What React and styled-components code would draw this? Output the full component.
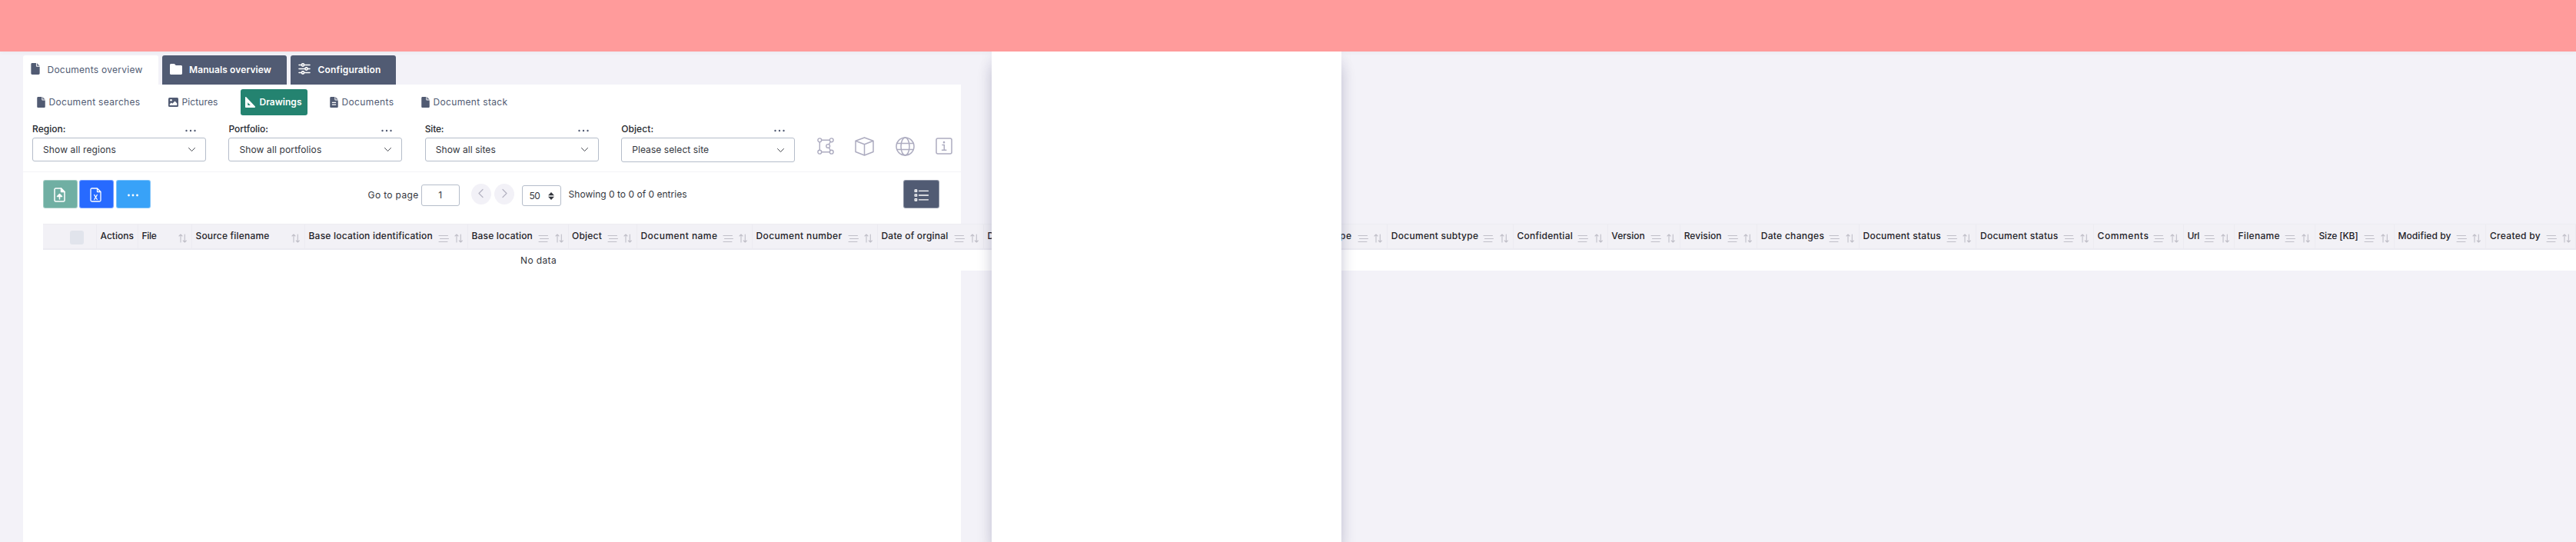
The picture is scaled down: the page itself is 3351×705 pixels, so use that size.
import React, { useLayoutEffect, useRef, useState } from "react";
import styled, { createGlobalStyle } from "styled-components";

const slate = "#515b73";

const GlobalStyle = createGlobalStyle`
  * { box-sizing: border-box; }
  body { margin: 0; font-family: Inter, "Open Sans", "Liberation Sans", sans-serif; font-size: 12px; color: #33363d; }
`;

const Page = styled.div`
  position: relative;
  height: 705px;
  overflow: hidden;
  background: #f3f2f8;
`;
const Banner = styled.header`
  height: 67px;
  background: #ff9b9b;
  box-shadow: 0 1px 5px rgba(60, 60, 90, 0.06);
`;
const Tabs = styled.nav`
  display: flex;
  gap: 5px;
  padding: 5px 0 0 30px;
`;
const Tab = styled.div`
  width: ${(p) => p.$width}px;
  height: 38px;
  padding-left: ${(p) => p.$pad}px;
  display: flex;
  align-items: center;
  gap: ${(p) => p.$gap}px;
  border-radius: 3px 3px 0 0;
  background: ${(p) => (p.$active ? "#fff" : slate)};
  color: ${(p) => (p.$active ? slate : "#fff")};
  font-weight: ${(p) => (p.$active ? 400 : 600)};

  svg { margin-bottom: 3px; }
`;
const Panel = styled.main`
  width: 1220px;
  height: 595px;
  margin-left: 30px;
  background: #fff;
`;
const SubTabs = styled.nav`
  display: flex;
  padding: 6px 0 0 12px;
`;
const SubTab = styled.div`
  height: 34px;
  width: ${(p) => p.$width}px;
  margin-right: ${(p) => p.$after}px;
  padding-left: ${(p) => p.$pad || 5.5}px;
  display: flex;
  align-items: center;
  gap: ${(p) => p.$gap || 5}px;
  border-radius: 3px;
  color: ${(p) => (p.$active ? "#fff" : slate)};
  background: ${(p) => (p.$active ? "#248370" : "transparent")};
  font-weight: ${(p) => (p.$active ? 600 : 400)};
`;
const Filters = styled.section`
  display: flex;
  height: 74px;
  padding: 9px 0 0 12px;
  border-bottom: 1px solid #f4f4f7;
`;
const Field = styled.div`
  width: 226px;
  margin-right: 29.4px;
`;
const FieldHead = styled.div`
  height: 20px;
  padding: 0 13px 2px 0;
  display: flex;
  justify-content: space-between;
  align-items: center;
  color: #25282e;
  font-weight: 500;
`;
const SelectBox = styled.div`
  height: ${(p) => (p.$tall ? 32 : 31)}px;
  padding: 0 12px 0 13px;
  display: flex;
  justify-content: space-between;
  align-items: center;
  border: 1px solid #b5bdca;
  border-radius: 3px;
`;
const FilterIcons = styled.div`
  display: flex;
  align-items: center;
  gap: 27.5px;
  height: 26px;
  margin: 18px 0 0 -1px;
  color: #adacc0;
`;
const Toolbar = styled.section`
  display: flex;
  align-items: flex-start;
  height: 67px;
  padding: 10px 28px 0 26px;
`;
const ActionButton = styled.div`
  width: ${(p) => p.$width || 45}px;
  height: 37px;
  margin-right: ${(p) => (p.$last ? 0 : 2.3)}px;
  display: flex;
  align-items: center;
  justify-content: center;
  padding: ${(p) => p.$nudge || "0"};
  border-radius: 3px;
  border: 1px solid rgba(255, 255, 255, 0.35);
  color: #fff;
  background: ${(p) => p.$color};
`;
const Pager = styled.div`
  flex: 1;
  display: flex;
  padding: 6px 0 0 283px;
`;
const PagerText = styled.div`
  height: 28px;
  display: flex;
  align-items: center;
  margin-top: ${(p) => p.$drop || 0}px;
  margin-left: ${(p) => p.$before || 0}px;
`;
const PageInput = styled.div`
  width: 50px;
  height: 28px;
  padding-bottom: 2px;
  margin: 0 15px 0 3px;
  display: flex;
  align-items: center;
  justify-content: center;
  border: 1px solid #b5bdca;
  border-radius: 3px;
`;
const Round = styled.div`
  width: 26px;
  height: 27px;
  margin: -1px 4px 0 0;
  padding-bottom: 2px;
  display: flex;
  align-items: center;
  justify-content: center;
  border-radius: 50%;
  background: #f2f1f7;
  color: #b4b3c2;
`;
const SizeSelect = styled.div`
  width: 51px;
  height: 27px;
  margin: 1px 0 0 6px;
  padding: 0 8px 0 9px;
  display: flex;
  align-items: center;
  justify-content: space-between;
  border: 1px solid #b5bdca;
  border-radius: 3px;
`;
const Table = styled.section`
  width: 3295px;
  margin-left: 26px;
  background: #fff;
`;
const HeadRow = styled.div`
  display: flex;
  height: 34px;
  background: #f2f1f6;
  border-top: 1px solid #ededf2;
  border-bottom: 2px solid #ebeaf1;
`;
const HeadCell = styled.div`
  flex: none;
  width: ${(p) => p.$width}px;
  padding: 0 5px 1px 4.5px;
  display: flex;
  align-items: center;
  border-right: 1px solid #ecebf1;
  color: #1f2228;
  font-weight: 500;
`;
const CellIcons = styled.div`
  display: flex;
  align-items: flex-end;
  gap: 7.5px;
  margin-left: auto;
  padding: 6px 1px 0 0;
  color: #c0bfc8;
`;
const Check = styled.div`
  width: 18px;
  height: 18px;
  margin: 4px 0 0 ${(p) => p.$before}px;
  border-radius: 3px;
  background: #e1e4ec;
`;
const EmptyRow = styled.div`
  height: 27px;
  padding-left: 621px;
  display: flex;
  align-items: center;
`;
const Drawer = styled.aside`
  position: absolute;
  top: 67px;
  left: 1290px;
  width: 455px;
  height: 638px;
  background: #fff;
  box-shadow: 0 20px 18px rgba(40, 40, 90, 0.2), 0 0 18px rgba(40, 40, 90, 0.06);
  clip-path: inset(0 -30px 0 -30px);
`;
const Label = styled.span`
  white-space: nowrap;
  line-height: 18px;
`;

/* Label tracked so that it fills the given width. */
function Fit({ w, children }) {
  const ref = useRef(null);
  const [spacing, setSpacing] = useState(0);
  useLayoutEffect(() => {
    const natural = ref.current.getBoundingClientRect().width;
    setSpacing((w - natural) / children.length);
  }, [w, children]);
  return <Label ref={ref} style={{ letterSpacing: spacing }}>{children}</Label>;
}

const Svg = ({ w, h, sw = 1, children }) => (
  <svg width={w} height={h} viewBox={`0 0 ${w} ${h}`} fill="none" stroke="currentColor" strokeWidth={sw} strokeLinecap="round" strokeLinejoin="round">
    {children}
  </svg>
);

const FileIcon = ({ w = 11, h = 14, lines }) => (
  <svg width={w} height={h} viewBox="0 0 12 16" fill="currentColor">
    <path d="M1.500 0H7v4.200c0 .5.300.8.800.8H12v9.500c0 .8-.7 1.500-1.500 1.500h-9C.7 16 0 15.300 0 14.500v-13C0 .7.700 0 1.500 0z" />
    <path d="M8 0l4 4H8z" opacity=".85" />
    {lines && <path d="M3 8.500h6M3 11.500h6" stroke="#fff" strokeWidth="1.300" />}
  </svg>
);
const FolderIcon = () => (
  <svg width="16" height="14" viewBox="0 0 16 14" fill="currentColor">
    <path d="M1.500 0h4.300l2 2h6.700c.8 0 1.500.7 1.500 1.500v9c0 .8-.7 1.500-1.500 1.500h-13C.7 14 0 13.300 0 12.500v-11C0 .7.700 0 1.500 0z" />
  </svg>
);
const SlidersIcon = () => (
  <Svg w={16} h={15} sw={1.6}>
    <path d="M1 2.500h3M8 2.500h7M1 7.500h7.500M12.500 7.500H15M1 12.500h3M8 12.500h7" />
    <circle cx="6" cy="2.500" r="1.600" /><circle cx="10.500" cy="7.500" r="1.600" /><circle cx="6" cy="12.500" r="1.600" />
  </Svg>
);
const ImageIcon = () => (
  <svg width="13" height="12" viewBox="0 0 13 12">
    <rect width="13" height="12" rx="1.500" fill="currentColor" />
    <circle cx="3.500" cy="3.300" r="1.300" fill="#fff" />
    <path d="M1.800 10V8.500l2-2 1.500 1.300L8.500 4.500l2.800 3V10z" fill="#fff" />
  </svg>
);
const TriangleIcon = () => (
  <svg width="13" height="14" viewBox="0 0 13 14" fill="currentColor" fillRule="evenodd">
    <path d="M0 .8C0 0 .8-.2 1.300.3L12.700 12.300c.6.700.2 1.700-.7 1.700H1c-.6 0-1-.4-1-1zM3.300 7.300v3.700h3.500z" />
  </svg>
);
const Dots = ({ r = 1.2 }) => (
  <svg width="14" height="4" viewBox="0 0 14 4" fill="currentColor">
    <circle cx="1.500" cy="2" r={r} /><circle cx="7" cy="2" r={r} /><circle cx="12.500" cy="2" r={r} />
  </svg>
);
const DotsWrap = styled.span`
  display: flex;
  padding-top: 3px;
  color: ${slate};
`;
const Chevron = () => <Svg w={11} h={7} sw={0.9}><path d="M1.500 1.500l4 4 4-4" /></Svg>;
const PolygonIcon = () => (
  <Svg w={22} h={22} sw={1.4}>
    <circle cx="3.300" cy="3.300" r="2.400" /><circle cx="18.700" cy="3.300" r="2.400" />
    <circle cx="3.300" cy="18.700" r="2.400" /><circle cx="18.700" cy="18.700" r="2.400" />
    <circle cx="14.200" cy="11" r="2.400" />
    <path d="M5.700 3.300h10.600M5.700 18.700h10.600M3.300 5.700v10.600M17.300 5.300l-2 3.500M17.300 16.700l-2-3.500" />
  </Svg>
);
const CubeIcon = () => (
  <Svg w={25} h={25} sw={1.5}>
    <path d="M12.500 1l11.500 4.200v14.300l-11.500 4.500L1 19.500V5.200zM1 5.200l11.500 4.500L24 5.200M12.500 9.700V24" />
  </Svg>
);
const GlobeIcon = () => (
  <Svg w={25} h={25} sw={1.5}>
    <circle cx="12.500" cy="12.500" r="11.500" />
    <ellipse cx="12.500" cy="12.500" rx="5.500" ry="11.500" />
    <path d="M1.800 8.500h21.400M1.800 16.500h21.400" />
  </Svg>
);
const InfoIcon = () => (
  <Svg w={22} h={22} sw={1.5}>
    <rect x="1" y="1" width="20" height="20" rx="2" />
    <path d="M9 9.500h2.300v6.500M8.500 16.300h5.300" />
    <circle cx="11" cy="6.200" r=".6" fill="currentColor" />
  </Svg>
);
const UploadIcon = () => (
  <Svg w={15} h={19} sw={1.5}>
    <path d="M9.500 1H2.500C1.600 1 1 1.600 1 2.500v14c0 .9.600 1.500 1.500 1.500h10c.9 0 1.500-.6 1.500-1.500V5.500z" />
    <path d="M9.500 1v4.500H14z" fill="currentColor" />
    <path d="M7.500 15v-4M4.500 11.500l3-3 3 3z" fill="currentColor" />
  </Svg>
);
const ExcelIcon = () => (
  <Svg w={15} h={19} sw={1.3}>
    <path d="M9.500 1H2.500C1.600 1 1 1.600 1 2.500v14c0 .9.600 1.500 1.500 1.500h10c.9 0 1.500-.6 1.500-1.500V5.500zM9.500 1v4.500H14" />
    <path d="M5.700 9.500l3.600 6M9.300 9.500l-3.600 6" />
  </Svg>
);
const ListIcon = () => (
  <Svg w={20} h={16} sw={1.3}>
    <rect x="1.200" y="1" width="2.400" height="2.400" /><rect x="1.200" y="6.800" width="2.400" height="2.400" /><rect x="1.200" y="12.600" width="2.400" height="2.400" />
    <path d="M6.500 2.300h12M6.500 8h12M6.500 13.800h12" />
  </Svg>
);
const Arrow = ({ flip }) => (
  <Svg w={8} h={13} sw={1.2}><path d={flip ? "M2 1.500l5 5-5 5" : "M6 1.500l-5 5 5 5"} /></Svg>
);
const Spinner = () => (
  <svg width="8" height="10" viewBox="0 0 8 10" fill="#33363d"><path d="M4 0l4 4.200H0zM4 10L0 5.800h8z" /></svg>
);
const FilterLines = () => <Svg w={14} h={11}><path d="M1 1.500h11.500M2.500 5.500h11M1 9.500h11" /></Svg>;
const SortIcon = () => (
  <Svg w={11} h={12} sw={1.1}><path d="M3 1v10M1 3l2-2 2 2M8.300 1v10M6.300 9l2 2 2-2" /></Svg>
);

const fields = [
  ["Region:", 43.5, "Show all regions", 95],
  ["Portfolio:", 51.5, "Show all portfolios", 107],
  ["Site:", 24.5, "Show all sites", 78],
  ["Object:", 42, "Please select site", 100],
];

/* name, label width, column width, number of header icons */
const columns = [
  ["Actions", 43.5, 54, 0],
  ["File", 19, 70, 1],
  ["Source filename", 96, 147, 1],
  ["Base location identification", 161.5, 212, 2],
  ["Base location", 79.5, 130.5, 2],
  ["Object", 39, 89.5, 2],
  ["Document name", 100, 150, 2],
  ["Document number", 112, 163, 2],
  ["Date of orginal", 87, 138, 2],
  ["Date", 28, 379, 2],
  ["Document type", 95, 146.3, 2],
  ["Document subtype", 113.5, 163.7, 2],
  ["Confidential", 72.5, 122.8, 2],
  ["Version", 43.5, 94.4, 2],
  ["Revision", 49, 100, 2],
  ["Date changes", 82.5, 132.8, 2],
  ["Document status", 101.5, 152.5, 2],
  ["Document status", 101.5, 152.5, 2],
  ["Comments", 67, 117, 2],
  ["Url", 15.5, 66, 2],
  ["Filename", 54.5, 105, 2],
  ["Size [KB]", 51, 103, 2],
  ["Modified by", 69, 119.5, 2],
  ["Created by", 66, 117, 2],
];

export default function App() {
  return (
    <Page>
      <GlobalStyle />
      <Banner />
      <Tabs>
        <Tab $width={176} $pad={10} $gap={9.5} $active><FileIcon w={12} h={15} /><Fit w={124}>Documents overview</Fit></Tab>
        <Tab $width={162} $pad={9.5} $gap={9.5}><FolderIcon /><Fit w={107}>Manuals overview</Fit></Tab>
        <Tab $width={137} $pad={10} $gap={9.5}><SlidersIcon /><Fit w={82}>Configuration</Fit></Tab>
      </Tabs>
      <Panel>
        <SubTabs>
          <SubTab $width={147} $after={24}><FileIcon /><Fit w={119}>Document searches</Fit></SubTab>
          <SubTab $width={77} $after={23}><ImageIcon /><Fit w={47}>Pictures</Fit></SubTab>
          <SubTab $width={87} $after={23} $gap={6} $active><TriangleIcon /><Fit w={55}>Drawings</Fit></SubTab>
          <SubTab $width={95} $after={24}><FileIcon lines /><Fit w={68}>Documents</Fit></SubTab>
          <SubTab $width={124} $after={0}><FileIcon /><Fit w={97}>Document stack</Fit></SubTab>
        </SubTabs>
        <Filters>
          {fields.map(([name, nw, value, vw], i) => (
            <Field key={name}>
              <FieldHead><Fit w={nw}>{name}</Fit><DotsWrap><Dots /></DotsWrap></FieldHead>
              <SelectBox $tall={i === 3}><Fit w={vw}>{value}</Fit><Chevron /></SelectBox>
            </Field>
          ))}
          <FilterIcons><PolygonIcon /><CubeIcon /><GlobeIcon /><InfoIcon /></FilterIcons>
        </Filters>
        <Toolbar>
          <ActionButton $color="#70afa3" $nudge="2px 3px 0 0"><UploadIcon /></ActionButton>
          <ActionButton $color="#276aff" $nudge="2px 3px 0 0"><ExcelIcon /></ActionButton>
          <ActionButton $color="#38a2f8" $nudge="2px 0 0 0" $last><Dots r={1.4} /></ActionButton>
          <Pager>
            <PagerText><Fit w={66}>Go to page</Fit></PagerText>
            <PageInput>1</PageInput>
            <Round><Arrow /></Round>
            <Round><Arrow flip /></Round>
            <SizeSelect><Fit w={13.5}>50</Fit><Spinner /></SizeSelect>
            <PagerText $before={10} $drop={-1}><Fit w={154}>Showing 0 to 0 of 0 entries</Fit></PagerText>
          </Pager>
          <ActionButton $color={slate} $width={47} $nudge="3px 0 0 0" $last><ListIcon /></ActionButton>
        </Toolbar>
        <Table>
          <HeadRow>
            <HeadCell $width={70}><Check $before={30} /></HeadCell>
            {columns.map(([name, w, width, icons], i) => (
              <HeadCell key={i} $width={width}>
                <Fit w={w}>{name}</Fit>
                {icons > 0 && <CellIcons>{icons === 2 && <FilterLines />}<SortIcon /></CellIcons>}
              </HeadCell>
            ))}
          </HeadRow>
          <EmptyRow><Fit w={47}>No data</Fit></EmptyRow>
        </Table>
      </Panel>
      <Drawer />
    </Page>
  );
}
